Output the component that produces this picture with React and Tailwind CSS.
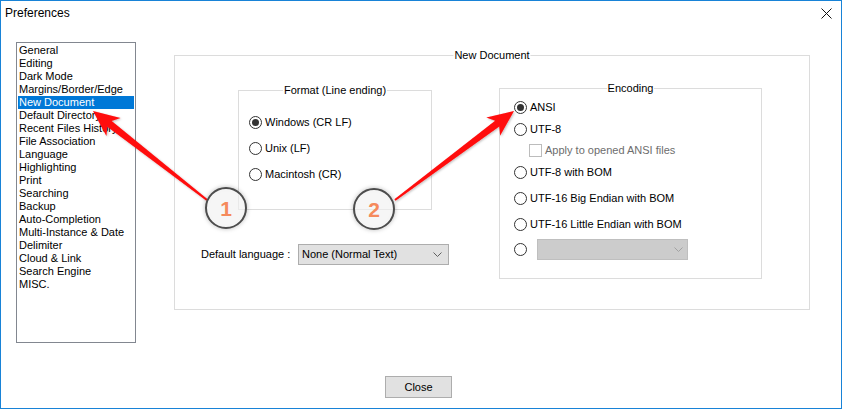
import React from "react";

const pages = [
  "General",
  "Editing",
  "Dark Mode",
  "Margins/Border/Edge",
  "New Document",
  "Default Directory",
  "Recent Files History",
  "File Association",
  "Language",
  "Highlighting",
  "Print",
  "Searching",
  "Backup",
  "Auto-Completion",
  "Multi-Instance & Date",
  "Delimiter",
  "Cloud & Link",
  "Search Engine",
  "MISC.",
];

function Radio({ checked }) {
  return (
    <span className="flex h-[13px] w-[13px] shrink-0 items-center justify-center rounded-full border border-[#333333] bg-white">
      {checked && <span className="h-[7px] w-[7px] rounded-full bg-[#333333]" />}
    </span>
  );
}

function RadioRow({ label, checked, className = "" }) {
  return (
    <div className={`flex h-[13px] items-center gap-[3px] ${className}`}>
      <Radio checked={checked} />
      <span className="whitespace-nowrap">{label}</span>
    </div>
  );
}

function Chevron({ color }) {
  return (
    <svg width="9" height="5" viewBox="0 0 9 5" className="shrink-0">
      <polyline points="0.5,0.5 4.5,4.5 8.5,0.5" fill="none" stroke={color} strokeWidth="1" />
    </svg>
  );
}

function GroupBox({ title, className = "", children }) {
  return (
    <div className={`relative border border-[#dcdcdc] ${className}`}>
      <span className="absolute -top-[7px] left-1/2 -translate-x-1/2 whitespace-nowrap bg-white px-[1px] leading-[13px]">
        {title}
      </span>
      {children}
    </div>
  );
}

export default function App() {
  return (
    <div className="relative h-[409px] w-[842px] border border-[#1883d7] bg-white font-['Liberation_Sans',Arial,sans-serif] text-[11px] leading-[13px] text-black">
      {/* title bar */}
      <div className="flex h-[41px] justify-between">
        <span className="pl-[4px] pt-[5px] text-[12px] leading-[15px]">Preferences</span>
        <div className="pr-[9px] pt-[7px]">
          <svg width="11" height="11" viewBox="0 0 11 11">
            <path d="M0.5 0.5 L10.5 10.5 M10.5 0.5 L0.5 10.5" stroke="#111" strokeWidth="1" />
          </svg>
        </div>
      </div>

      <div className="flex pl-[15px]">
        {/* page list */}
        <div className="h-[301px] w-[120px] shrink-0 border border-[#828790] p-[1px]">
          {pages.map((p) => (
            <div
              key={p}
              className={`h-[13px] overflow-hidden whitespace-nowrap px-[1px] leading-[13px] ${
                p === "New Document" ? "bg-[#0078d7] text-white" : ""
              }`}
            >
              {p}
            </div>
          ))}
        </div>

        {/* New Document */}
        <GroupBox title="New Document" className="ml-[38px] mt-[13px] h-[255px] w-[636px] shrink-0">
          <div className="flex items-start pl-[26px]">
            <div className="flex w-[248px] shrink-0 flex-col items-start">
              <GroupBox title="Format (Line ending)" className="ml-[37px] mt-[34px] h-[120px] w-[194px]">
                <div className="flex flex-col gap-[13px] pl-[10px] pt-[25px]">
                  <RadioRow label="Windows (CR LF)" checked />
                  <RadioRow label="Unix (LF)" />
                  <RadioRow label="Macintosh (CR)" />
                </div>
              </GroupBox>

              <div className="mt-[34px] flex h-[21px] items-center">
                <span className="w-[97px] whitespace-nowrap">Default language :</span>
                <div className="flex h-[21px] w-[151px] items-center justify-between border border-[#adadad] bg-[#e1e1e1] pl-[3px] pr-[6px]">
                  <span className="whitespace-nowrap">None (Normal Text)</span>
                  <Chevron color="#606060" />
                </div>
              </div>
            </div>

            <GroupBox title="Encoding" className="ml-[50px] mt-[32px] h-[191px] w-[263px] shrink-0">
              <div className="flex flex-col pl-[14px]">
                <RadioRow label="ANSI" checked className="mt-[12px]" />
                <RadioRow label="UTF-8" className="mt-[9px]" />
                <div className="mt-[8px] flex h-[13px] items-center gap-[3px] pl-[15px] text-[#6d6d6d]">
                  <span className="h-[13px] w-[13px] shrink-0 border border-[#bcbcbc] bg-white" />
                  <span className="whitespace-nowrap">Apply to opened ANSI files</span>
                </div>
                <RadioRow label="UTF-8 with BOM" className="mt-[9px]" />
                <RadioRow label="UTF-16 Big Endian with BOM" className="mt-[13px]" />
                <RadioRow label="UTF-16 Little Endian with BOM" className="mt-[13px]" />
                <div className="mt-[8px] flex h-[21px] items-center gap-[10px]">
                  <Radio />
                  <div className="flex h-[21px] w-[151px] items-center justify-end border border-[#bfbfbf] bg-[#cccccc] pr-[4px]">
                    <Chevron color="#a2a2a2" />
                  </div>
                </div>
              </div>
            </GroupBox>
          </div>
        </GroupBox>
      </div>

      <div className="ml-[384px] mt-[33px] flex h-[22px] w-[67px] items-center justify-center border border-[#adadad] bg-[#e1e1e1]">
        Close
      </div>

      {/* callouts */}
      <svg width="842" height="409" className="pointer-events-none absolute -left-px -top-px">
        <defs>
          <filter id="shade" x="-20%" y="-20%" width="140%" height="140%">
            <feDropShadow dx="0" dy="0" stdDeviation="2" floodColor="#000" floodOpacity="0.3" />
          </filter>
          <filter id="arrowShade" x="-10%" y="-10%" width="120%" height="120%">
            <feDropShadow dx="1" dy="1" stdDeviation="1" floodColor="#000" floodOpacity="0.25" />
          </filter>
        </defs>
        <polygon
          filter="url(#arrowShade)"
          fill="#ff0a0a"
          points="93,111 120.6,117.9 111.7,121.1 207.6,199.2 206.4,200.8 107.3,126.7 106.4,136.1"
        />
        <polygon
          filter="url(#arrowShade)"
          fill="#ff0a0a"
          points="514,111 500.1,135.8 499.3,126.4 395.6,200.8 394.4,199.2 495.1,120.8 486.3,117.4"
        />
        <g filter="url(#shade)">
          <circle cx="226" cy="208" r="20" fill="#ffffff" fillOpacity="0.55" stroke="#4d4d4d" strokeWidth="2" />
          <circle cx="374" cy="209" r="20" fill="#ffffff" fillOpacity="0.55" stroke="#4d4d4d" strokeWidth="2" />
        </g>
        <text x="226" y="216" textAnchor="middle" fontSize="21" fontWeight="bold" fill="#f58a5c" fontFamily="Liberation Sans, Arial, sans-serif">
          1
        </text>
        <text x="374" y="217" textAnchor="middle" fontSize="21" fontWeight="bold" fill="#f58a5c" fontFamily="Liberation Sans, Arial, sans-serif">
          2
        </text>
      </svg>
    </div>
  );
}
